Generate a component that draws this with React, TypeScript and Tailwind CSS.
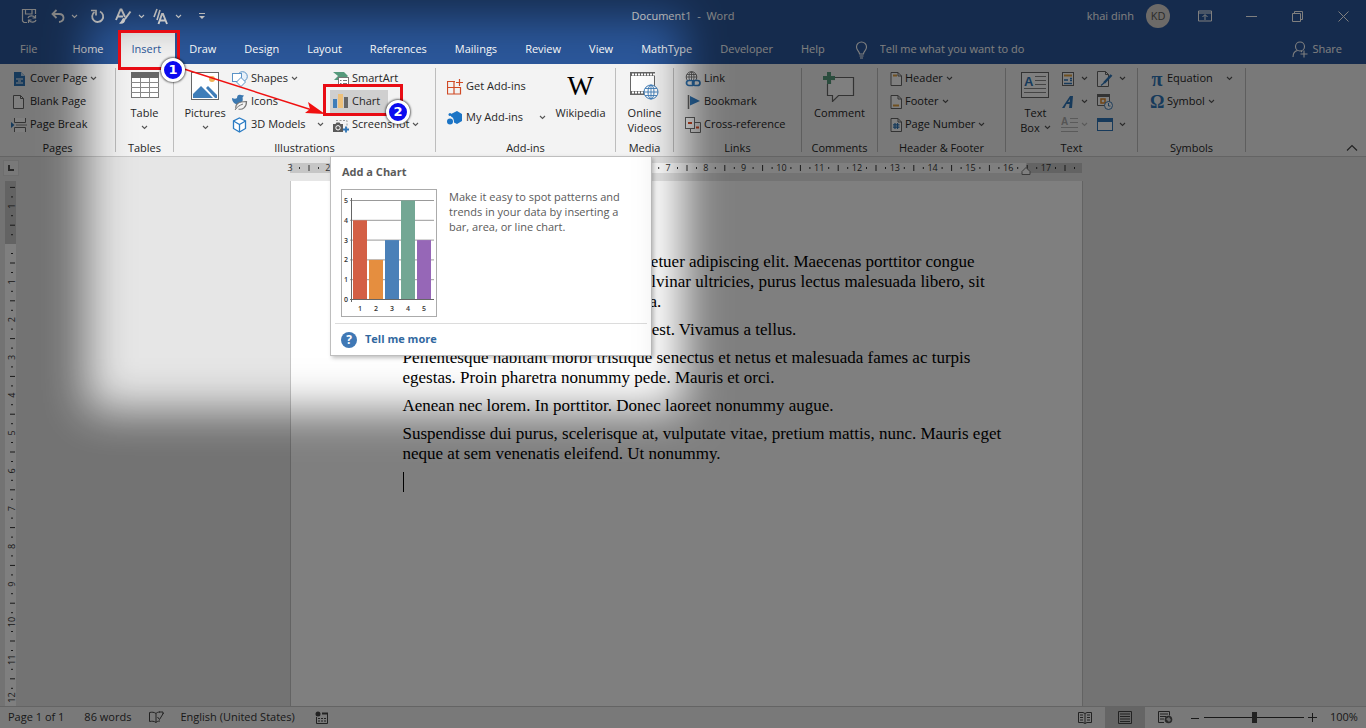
import type { ReactNode } from "react";

const UI_FONT = "font-['Open_Sans','Noto_Sans',sans-serif]";

function Icon({ w = 16, h = 16, children }: { w?: number; h?: number; children: ReactNode }) {
  return (
    <svg width={w} height={h} viewBox={`0 0 ${w} ${h}`} fill="none" className="shrink-0" aria-hidden="true">
      {children}
    </svg>
  );
}

function Caret({ light = false, faded = false }: { light?: boolean; faded?: boolean }) {
  return (
    <Icon w={7} h={5}>
      <path d="M1 1l2.5 2.5L6 1" stroke={light ? "#fff" : faded ? "#b5b5b5" : "#555"} strokeWidth="1.1" />
    </Icon>
  );
}

/* ---------- ribbon icons ---------- */

const CoverPageIcon = () => (
  <Icon>
    <path d="M3 1h7l4 4v10H3z" fill="#2e75b6" />
    <path d="M10 1v4h4z" fill="#bcd6ee" />
    <path d="M5 8h7M5 12h7M7 10h3" stroke="#fff" />
  </Icon>
);

const BlankPageIcon = () => (
  <Icon>
    <path d="M2.5 1.5h7l3 3v10h-10z" fill="#fff" stroke="#666" />
    <path d="M9.5 1.5v3h3" stroke="#666" />
  </Icon>
);

const PageBreakIcon = () => (
  <Icon>
    <path d="M3.500 1v4.500h11V1M3.500 15v-4.500h11V15" fill="#fff" stroke="#666" />
    <path d="M5 8h11" stroke="#888" />
    <path d="M0 5l3.500 3L0 11z" fill="#2e75b6" />
  </Icon>
);

const TableIcon = () => (
  <Icon w={28} h={26}>
    <rect x=".5" y=".5" width="27" height="25" fill="#fff" stroke="#777" />
    <rect width="28" height="6" fill="#666" />
    <path d="M9.500 6v20M18.500 6v20M0 10.500h28M0 15.500h28M0 20.500h28" stroke="#888" />
  </Icon>
);

const PicturesIcon = () => (
  <Icon w={28} h={28}>
    <rect x=".5" y=".5" width="27" height="27" fill="#fff" stroke="#666" />
    <circle cx="21" cy="7" r="3" fill="#f0b355" />
    <path d="M2 26v-4l8-8 12 12z" fill="#3f7db8" />
    <path d="M15 16l2-2 9 9v3h-2z" fill="#3f7db8" />
  </Icon>
);

const ShapesIcon = () => (
  <Icon>
    <circle cx="10.500" cy="5.500" r="4.800" fill="#e8f1fa" stroke="#5b93c7" />
    <rect x=".5" y="2.500" width="9" height="8" fill="#fff" stroke="#5b93c7" />
    <path d="M9 6.500l4.500 4.500L9 15.500 4.500 11z" fill="#fff" stroke="#5b93c7" />
  </Icon>
);

const IconsIcon = () => (
  <Icon>
    <path d="M0 4c2 1 4 1 5 0 0-3 2-4 4-3l3 .5-1.500 2c1 4-1 7-4.500 7C3 10.500 0 8 0 4z" fill="#3b78b0" />
    <path d="M4 14.500c-1-4 2-7 10.500-7 0 6-4 8.500-8 7.500" fill="#f3f3f3" stroke="#777" strokeWidth="1.200" />
    <path d="M3 16c2-3 4-4.500 8-6" stroke="#777" />
  </Icon>
);

const CubeIcon = () => (
  <Icon>
    <path d="M7.500 1l6 3v7.500l-6 3.500-6-3.500V4z" fill="#fff" stroke="#2b7cc4" strokeWidth="1.300" />
    <path d="M1.500 4l6 3.500 6-3.500M7.500 7.500V15" stroke="#2b7cc4" strokeWidth="1.300" />
  </Icon>
);

const SmartArtIcon = () => (
  <Icon>
    <path d="M0 1h11l4 4-4 4H1l4-4z" fill="#569a7c" />
    <rect x="5.500" y="6.500" width="10" height="9" fill="#fff" stroke="#777" />
    <path d="M7 9.500h1.500M7 12.500h1.500M10 9.500h4M10 12.500h4" stroke="#777" />
  </Icon>
);

const ChartIcon = () => (
  <Icon>
    <rect x="0" y="5" width="4" height="9" fill="#3f7db8" />
    <rect x="5" y="0" width="5" height="14" fill="#edc07a" />
    <rect x="11" y="3" width="4" height="11" fill="#666" />
  </Icon>
);

const ScreenshotIcon = () => (
  <Icon>
    <path d="M3 3.500h11v7" stroke="#999" strokeDasharray="2 1.500" />
    <path d="M0 7h2.500l1-1.500h3L7.500 7H10v8H0z" fill="#5a5a5a" />
    <circle cx="5" cy="10.800" r="2.200" stroke="#fff" />
    <path d="M13 9.500v6M10 12.500h6" stroke="#2e75b6" strokeWidth="1.800" />
  </Icon>
);

const GetAddinsIcon = () => (
  <Icon>
    <path d="M8 2.500H.5v12.500h13V8.500H.5M7 2.500V15" stroke="#d04a25" strokeWidth="1.200" />
    <path d="M12.500 0v7M9 3.500h7" stroke="#d04a25" strokeWidth="1.200" />
  </Icon>
);

const MyAddinsIcon = () => (
  <Icon>
    <path d="M10 1l5 3v7l-5 3-3-1.500C7 9 6 7 4 6.500V4z" fill="#1b74c5" />
    <circle cx="3" cy="11.500" r="3" fill="#1b74c5" />
    <circle cx="3" cy="4.500" r="1.500" fill="#1b74c5" />
  </Icon>
);

const OnlineVideosIcon = () => (
  <Icon w={29} h={28}>
    <rect x=".5" y=".5" width="24" height="22" fill="#fff" stroke="#666" />
    <path d="M1 2.500h24M1 20.500h24" stroke="#666" strokeWidth="3" />
    <path d="M2 2.500h23M2 20.500h23" stroke="#fff" strokeWidth="2" strokeDasharray="2 1" />
    <circle cx="21" cy="20" r="7" fill="#fff" stroke="#3f7db8" />
    <ellipse cx="21" cy="20" rx="3" ry="7" stroke="#3f7db8" />
    <path d="M14 20h14M15 16.500h12M15 23.500h12M21 13v14" stroke="#3f7db8" strokeWidth=".9" />
  </Icon>
);

const LinkIcon = () => (
  <Icon>
    <circle cx="6.500" cy="6" r="5.300" fill="#fff" stroke="#666" />
    <path d="M6.500 1v9M1 6h11M2 3.500h9" stroke="#666" strokeWidth=".9" />
    <ellipse cx="6.500" cy="6" rx="2.500" ry="5.300" stroke="#666" strokeWidth=".9" />
    <rect x="1.500" y="9.500" width="7.500" height="5" rx="2.500" fill="#f3f3f3" stroke="#2e75b6" strokeWidth="1.700" />
    <rect x="7.500" y="9.500" width="7.500" height="5" rx="2.500" stroke="#2e75b6" strokeWidth="1.700" />
  </Icon>
);

const BookmarkIcon = () => (
  <Icon>
    <path d="M3.500 1v14" stroke="#666" strokeWidth="1.500" />
    <path d="M5 2l10 5-10 4.500z" fill="#2e75b6" />
  </Icon>
);

const CrossRefIcon = () => (
  <Icon>
    <rect x=".5" y=".5" width="9" height="11" fill="#fff" stroke="#666" />
    <path d="M10 5.500h5.500v10h-10V12" stroke="#666" />
    <path d="M3 6h4M11 10.500h3" stroke="#d04a25" strokeWidth="2" />
  </Icon>
);

const CommentIcon = () => (
  <Icon w={32} h={30}>
    <path d="M4.500 5.500h26v18h-15l-6 6v-6h-5z" fill="#fff" stroke="#666" strokeWidth="1.200" />
    <path d="M6 0v12M0 6h12" stroke="#f3f3f3" strokeWidth="6" />
    <path d="M6 0v12M0 6h12" stroke="#569a7c" strokeWidth="4" />
  </Icon>
);

function DocIcon({ children }: { children?: ReactNode }) {
  return (
    <Icon w={12} h={14}>
      <path d="M1 .5h7L11.500 4v9.500H1z" fill="#fff" stroke="#666" />
      <path d="M8 .5V4h3.500" stroke="#666" />
      {children}
    </Icon>
  );
}

const TextBoxIcon = () => (
  <Icon w={28} h={26}>
    <rect x=".5" y=".5" width="27" height="25" fill="#fff" stroke="#666" />
    <text x="3" y="14" fontSize="13" fontWeight="700" fill="#2e75b6" fontFamily="Liberation Sans">
      A
    </text>
    <path d="M14 4.500h11M14 8.500h11M14 12.500h11M3 16.500h22M3 20.500h22" stroke="#888" />
  </Icon>
);

const QuickPartsIcon = () => (
  <Icon w={14} h={16}>
    <rect x="1.500" y="1.500" width="11" height="13" fill="#fff" stroke="#666" />
    <path d="M3 4.500h8" stroke="#e0a040" strokeWidth="2" />
    <path d="M3 9h4M3 12.500h8M9 7.500h2M9 9.500h2" stroke="#2e75b6" strokeWidth="1.500" />
  </Icon>
);

const WordArtIcon = () => (
  <Icon w={14} h={14}>
    <path d="M1 13L9 1h3l-1 12H8l.5-4h-3L3.500 13z" fill="#2e75b6" />
    <path d="M7 7h1.700L9 4z" fill="#f3f3f3" />
  </Icon>
);

const DropCapIcon = () => (
  <Icon w={17} h={17}>
    <text x="0" y="9" fontSize="10" fontWeight="700" fill="#aaa" fontFamily="Liberation Sans">
      A
    </text>
    <path d="M9 2.500h8M9 6.500h8M0 11.500h17M0 15.500h17" stroke="#b5b5b5" />
  </Icon>
);

const SignatureIcon = () => (
  <Icon>
    <path d="M.5.500h8l3 3v12H.5z" fill="#fff" stroke="#666" />
    <path d="M8.500.500v3h3" stroke="#666" />
    <path d="M14.500 4L7 12" stroke="#2e75b6" strokeWidth="2.500" />
    <path d="M7 12l-3 2.500" stroke="#2e75b6" strokeWidth="1.200" />
  </Icon>
);

const DateIcon = () => (
  <Icon>
    <path d="M.5.500h12v11H.5z" fill="#fff" stroke="#666" />
    <path d="M0 1.500h13" stroke="#666" strokeWidth="3" />
    <rect x="4" y="5" width="4" height="4" stroke="#e08a2c" strokeWidth="1.500" />
    <circle cx="11.500" cy="11.500" r="4" fill="#fff" stroke="#3f7db8" />
    <path d="M11.500 9v3h2" stroke="#3f7db8" />
  </Icon>
);

const ObjectIcon = () => (
  <Icon>
    <rect x=".5" y="1.500" width="15" height="12" fill="#fff" stroke="#2e75b6" />
    <rect y="1" width="16" height="4" fill="#2e75b6" />
  </Icon>
);

/* ---------- ribbon pieces ---------- */

function Row({ icon, label, caret = false, spread = false }: { icon: ReactNode; label: string; caret?: boolean; spread?: boolean }) {
  return (
    <button className="flex h-[23px] items-center gap-[3px] whitespace-nowrap">
      {icon}
      <span>{label}</span>
      {caret && (
        <span className={spread ? "ml-auto pl-2" : ""}>
          <Caret />
        </span>
      )}
    </button>
  );
}

function Big({ icon, lines, caret = false }: { icon: ReactNode; lines: string[]; caret?: boolean }) {
  return (
    <button className="flex flex-col items-center pt-[5px]">
      <span className="flex h-[33px] items-start">{icon}</span>
      {lines.map((line) => (
        <span key={line} className="h-[15px] leading-[15px]">
          {line}
        </span>
      ))}
      {caret && (
        <span className="flex h-[15px] items-center">
          <Caret />
        </span>
      )}
    </button>
  );
}

function Group({ title, width, children }: { title: string; width: string; children: ReactNode }) {
  return (
    <section className={`flex shrink-0 ${width}`}>
      <div className="flex min-w-0 flex-1 flex-col pt-[3px]">
        <div className="flex h-[69px] shrink-0">{children}</div>
        <h2 className="pt-[3px] text-center leading-[17px]">{title}</h2>
      </div>
      <div className="my-1 w-px bg-[#bdbdbd]" />
    </section>
  );
}

function Ribbon() {
  return (
    <div className="flex h-[93px] shrink-0 border-b border-[#c8c8c8] bg-[#f3f3f3] text-[#262626]">
      <Group title="Pages" width="w-[116px]">
        <div className="flex flex-col pl-[11px]">
          <Row icon={<CoverPageIcon />} label="Cover Page" caret />
          <Row icon={<BlankPageIcon />} label="Blank Page" />
          <Row icon={<PageBreakIcon />} label="Page Break" />
        </div>
      </Group>
      <Group title="Tables" width="w-[58px]">
        <div className="flex flex-1 justify-center">
          <Big icon={<TableIcon />} lines={["Table"]} caret />
        </div>
      </Group>
      <Group title="Illustrations" width="w-[262px]">
        <div className="flex w-[58px] justify-center pl-1">
          <Big icon={<PicturesIcon />} lines={["Pictures"]} caret />
        </div>
        <div className="flex w-[92px] flex-col">
          <Row icon={<ShapesIcon />} label="Shapes" caret />
          <Row icon={<IconsIcon />} label="Icons" />
          <Row icon={<CubeIcon />} label="3D Models" caret spread />
        </div>
        <div className="flex flex-col pl-[6px]">
          <span className="flex pl-[3px]">
            <Row icon={<SmartArtIcon />} label="SmartArt" />
          </span>
          <span className="flex self-start bg-[#cfcfcf] pr-2 pl-[3px]">
            <Row icon={<ChartIcon />} label="Chart" />
          </span>
          <span className="flex pl-[3px]">
            <Row icon={<ScreenshotIcon />} label="Screenshot" caret />
          </span>
        </div>
      </Group>
      <Group title="Add-ins" width="w-[180px]">
        <div className="flex w-[110px] flex-col gap-2 pt-2 pl-[11px]">
          <Row icon={<GetAddinsIcon />} label="Get Add-ins" />
          <Row icon={<MyAddinsIcon />} label="My Add-ins" caret spread />
        </div>
        <div className="flex flex-1 justify-center">
          <Big icon={<span className="font-['Liberation_Serif',serif] text-[28px] leading-7 text-black">W</span>} lines={["Wikipedia"]} />
        </div>
      </Group>
      <Group title="Media" width="w-[58px]">
        <div className="flex flex-1 justify-center">
          <Big icon={<OnlineVideosIcon />} lines={["Online", "Videos"]} />
        </div>
      </Group>
      <Group title="Links" width="w-[128px]">
        <div className="flex flex-col pl-[11px]">
          <Row icon={<LinkIcon />} label="Link" />
          <Row icon={<BookmarkIcon />} label="Bookmark" />
          <Row icon={<CrossRefIcon />} label="Cross-reference" />
        </div>
      </Group>
      <Group title="Comments" width="w-[76px]">
        <div className="flex flex-1 justify-center">
          <Big icon={<CommentIcon />} lines={["Comment"]} />
        </div>
      </Group>
      <Group title="Header & Footer" width="w-[128px]">
        <div className="flex flex-col pl-3">
          <Row icon={<DocIcon><path d="M3 3.500h4" stroke="#e0a040" strokeWidth="2" /></DocIcon>} label="Header" caret />
          <Row icon={<DocIcon><path d="M3 10.500h6" stroke="#e0a040" strokeWidth="2" /></DocIcon>} label="Footer" caret />
          <Row
            icon={<DocIcon><path d="M5 5v6M7.500 5v6M3 6.800h6.500M3 9.200h6.500" stroke="#2e75b6" strokeWidth="1.200" /></DocIcon>}
            label="Page Number"
            caret
          />
        </div>
      </Group>
      <Group title="Text" width="w-[132px]">
        <div className="flex w-[55px] justify-center pl-1">
          <button className="flex flex-col items-center pt-[5px]">
            <span className="flex h-[33px] items-start">
              <TextBoxIcon />
            </span>
            <span className="leading-[15px]">Text</span>
            <span className="flex items-center gap-1 leading-[15px]">
              Box <Caret />
            </span>
          </button>
        </div>
        <div className="flex w-9 flex-col">
          {[<QuickPartsIcon />, <WordArtIcon />, <DropCapIcon />].map((icon, i) => (
            <button key={i} aria-label={["Quick Parts", "WordArt", "Drop Cap"][i]} className="flex h-[23px] items-center">
              <span className="flex w-5">{icon}</span>
              <Caret faded={i === 2} />
            </button>
          ))}
        </div>
        <div className="flex flex-col">
          {[<SignatureIcon />, <DateIcon />, <ObjectIcon />].map((icon, i) => (
            <button key={i} aria-label={["Signature Line", "Date & Time", "Object"][i]} className="flex h-[23px] items-center">
              <span className="flex w-[22px]">{icon}</span>
              {i !== 1 && <Caret />}
            </button>
          ))}
        </div>
      </Group>
      <Group title="Symbols" width="w-[108px]">
        <div className="flex w-[95px] flex-col pl-3">
          <Row icon={<span className="w-[14px] font-['Liberation_Serif',serif] text-xl leading-5 font-bold text-[#2e75b6]">π</span>} label="Equation" caret spread />
          <Row icon={<span className="w-[14px] font-['Liberation_Serif',serif] text-lg leading-5 font-bold text-[#2e75b6]">Ω</span>} label="Symbol" caret />
        </div>
      </Group>
      <button aria-label="Collapse the Ribbon" className="mt-auto mr-2 mb-1 ml-auto">
        <Icon w={12} h={8}>
          <path d="M1 6.500l5-5 5 5" stroke="#444" strokeWidth="1.200" />
        </Icon>
      </button>
    </div>
  );
}

/* ---------- window chrome ---------- */

function TitleBar() {
  return (
    <header className="grid h-8 shrink-0 grid-cols-[1fr_auto_1fr] items-center text-white">
      <div className="flex items-center pl-[21px]">
        <button aria-label="Save" className="mr-[14px]">
          <Icon>
            <path d="M6 14.500H3L1.500 13V1.500h13V6M4.500 2v4h6.500V2" stroke="#fff" strokeWidth="1.200" />
            <path d="M7 10c.7-2.500 5-3 7-.5M14.500 7v3h-3M15 12c-.7 2.500-5 3-7 .5M7.500 15v-3h3" stroke="#fff" strokeWidth="1.200" />
          </Icon>
        </button>
        <button aria-label="Undo" className="mr-[6px]">
          <Icon w={14} h={14}>
            <path d="M5.500 1L1.500 5l4 4M2 5h6c6 0 6 7.500 0 8" stroke="#fff" strokeWidth="1.800" />
          </Icon>
        </button>
        <button aria-label="Undo history" className="mr-3">
          <Caret light />
        </button>
        <button aria-label="Repeat" className="mr-[10px]">
          <Icon w={15} h={15}>
            <path d="M10 2.500A5.500 5.500 0 1 1 4.500 3" stroke="#fff" strokeWidth="1.800" />
            <path d="M1 1.500h5v5" stroke="#fff" strokeWidth="1.700" />
          </Icon>
        </button>
        <button aria-label="Styles" className="mr-[6px]">
          <Icon w={17} h={17}>
            <path d="M1 12L5.500 1.500h1L10 9M3 8.500h5" stroke="#fff" strokeWidth="1.900" />
            <path d="M15.500 3.500L10 11" stroke="#fff" strokeWidth="2" />
            <path d="M4 15.500c3 1 6 0 6.500-4.500l-2-1c-1.500.5-1.500 3-4.500 5.500z" fill="#fff" />
          </Icon>
        </button>
        <button aria-label="More styles" className="mr-2">
          <Caret light />
        </button>
        <button aria-label="Text effects" className="mr-[7px]">
          <Icon w={15} h={17}>
            <path d="M1 9L4 1M4 12L7 2" stroke="#fff" strokeWidth="1.600" />
            <path d="M5.500 16L9 6h1l4 10M7 12.500h5.500" stroke="#fff" strokeWidth="1.900" />
          </Icon>
        </button>
        <button aria-label="More effects" className="mr-4">
          <Caret light />
        </button>
        <button aria-label="Customize Quick Access Toolbar">
          <Icon w={8} h={8}>
            <path d="M1 1.500h6" stroke="#fff" />
            <path d="M1 4h6L4 7z" fill="#fff" />
          </Icon>
        </button>
      </div>
      <h1>Document1&nbsp; -&nbsp; Word</h1>
      <div className="flex items-center justify-end">
        <span>khai dinh</span>
        <span className="mx-3 flex size-6 items-center justify-center rounded-full bg-[#d9d4d0] text-[#555]">KD</span>
        <button aria-label="Ribbon Display Options" className="flex w-[46px] justify-center">
          <Icon w={14} h={12}>
            <path d="M.5 1h13v10H.5zM.5 3h13M7 10V5M4.500 7L7 4.500 9.500 7" stroke="#fff" />
          </Icon>
        </button>
        <button aria-label="Minimize" className="flex w-[46px] justify-center">
          <Icon w={11} h={11}>
            <path d="M0 5.500h11" stroke="#fff" />
          </Icon>
        </button>
        <button aria-label="Restore Down" className="flex w-[46px] justify-center">
          <Icon w={11} h={11}>
            <path d="M.5 2.500h8v8h-8zM2.500 2.500v-2h8v8h-2" stroke="#fff" />
          </Icon>
        </button>
        <button aria-label="Close" className="flex w-[46px] justify-center">
          <Icon w={11} h={11}>
            <path d="M.5.500l10 10M10.500.500l-10 10" stroke="#fff" />
          </Icon>
        </button>
      </div>
    </header>
  );
}

const TABS = ["Home", "Insert", "Draw", "Design", "Layout", "References", "Mailings", "Review", "View", "MathType", "Developer", "Help"];

function TabBar() {
  return (
    <nav className="flex h-8 shrink-0 items-stretch text-white">
      <button className="pt-[3px] pr-[21px] pl-5">File</button>
      {TABS.map((tab) => (
        <button key={tab} className={`px-[14px] pt-[3px] ${tab === "Insert" ? "bg-[#f3f3f3] text-[#2b579a]" : ""}`}>
          {tab}
        </button>
      ))}
      <label className="flex flex-1 items-center gap-3 pt-[3px] pl-4">
        <Icon w={13} h={18}>
          <path d="M4.500 13c0-3-3-3.500-3-7a5 5 0 0 1 10 0c0 3.500-3 4-3 7zM4.500 15h4M5 17h3" stroke="#fff" strokeWidth="1.100" />
        </Icon>
        <input aria-label="Tell me what you want to do" placeholder="Tell me what you want to do" className="w-44 bg-transparent outline-none placeholder:text-white" />
      </label>
      <button className="flex items-center gap-1 pt-[3px] pr-6">
        <Icon w={16} h={17}>
          <circle cx="8" cy="5.500" r="4.500" stroke="#fff" strokeWidth="1.100" />
          <path d="M1 16c0-4 2-6 4.500-6.500M9 10l1 1M12 9.500v7M8.500 13h7" stroke="#fff" strokeWidth="1.100" />
        </Icon>
        Share
      </button>
    </nav>
  );
}

/* ---------- rulers ---------- */

const CM = 37.8;

function HorizontalRuler() {
  const marks = Array.from({ length: 21 }, (_, i) => i - 3);
  return (
    <svg width="800" height="24" viewBox="-3 0 800 24" className="-ml-[3px] shrink-0" aria-hidden="true">
      <rect x="0" y="6" width="792" height="10" fill="#c6c6c6" />
      <rect x={3 * CM} y="6" width="623" height="10" fill="#fff" />
      {marks.map((n) => {
        const x = (n + 3) * CM;
        return (
          <g key={n} fill="#333">
            {n !== 0 && (
              <text x={n === -3 ? 0 : x} y="14" fontSize="9" textAnchor="middle">
                {Math.abs(n)}
              </text>
            )}
            <rect x={x + 9} y="10" width="1" height="2" />
            <rect x={x + 18.500} y="8" width="1" height="6" />
            <rect x={x + 28} y="10" width="1" height="2" />
          </g>
        );
      })}
      <path d="M732 17.500v-3l4-4 4 4v3z" fill="#fff" stroke="#777" />
    </svg>
  );
}

function VerticalRuler() {
  const marks = Array.from({ length: 15 }, (_, i) => i - 2);
  return (
    <svg width="20" height="525" viewBox="0 0 20 525" className="shrink-0" aria-hidden="true">
      <rect x="5" y="0" width="11" height="525" fill="#fff" />
      <rect x="5" y="0" width="11" height="63" fill="#c6c6c6" />
      {marks.map((n) => {
        const y = 63 + n * CM;
        return (
          <g key={n} fill="#333">
            {n !== 0 && n !== -2 && (
              <text x="0" y="0" fontSize="9" textAnchor="middle" transform={`translate(15 ${y}) rotate(-90)`}>
                {Math.abs(n)}
              </text>
            )}
            <rect x="11" y={y + 9} width="2" height="1" />
            <rect x="10" y={y + 18.500} width="5" height="1" />
            <rect x="11" y={y + 28} width="2" height="1" />
          </g>
        );
      })}
    </svg>
  );
}

function DocumentArea() {
  return (
    <div className="flex min-h-0 flex-1 flex-col overflow-hidden bg-[#e6e6e6]">
      <div className="flex h-6 shrink-0">
        <div className="w-5 shrink-0 pt-[3px] pl-[3px]">
          <button aria-label="Left tab" className="flex size-4 items-center justify-center border border-[#ddd] bg-[#f3f3f3]">
            <Icon w={6} h={6}>
              <path d="M1 0v5h5" stroke="#555" strokeWidth="2" />
            </Icon>
          </button>
        </div>
        <div className="flex flex-1 justify-center pr-[14px]">
          <div className="w-[793px]">
            <HorizontalRuler />
          </div>
        </div>
      </div>
      <div className="flex min-h-0 flex-1">
        <VerticalRuler />
        <main className="flex flex-1 justify-center pr-[14px]">
          <article className="w-[793px] space-y-2 border-x border-[#c6c6c6] bg-white pt-[71px] pr-14 pl-28 font-['Liberation_Serif',serif] text-[17px] leading-5 whitespace-nowrap text-black">
            <p>
              Lorem ipsum dolor sit amet, consectetuer adipiscing elit. Maecenas porttitor congue
              <br />
              massa. Fusce posuere, magna sed pulvinar ultricies, purus lectus malesuada libero, sit
              <br />
              amet commodo magna eros quis urna.
            </p>
            <p>Nunc viverra imperdiet enim. Fusce est. Vivamus a tellus.</p>
            <p>
              Pellentesque habitant morbi tristique senectus et netus et malesuada fames ac turpis
              <br />
              egestas. Proin pharetra nonummy pede. Mauris et orci.
            </p>
            <p>Aenean nec lorem. In porttitor. Donec laoreet nonummy augue.</p>
            <p>
              Suspendisse dui purus, scelerisque at, vulputate vitae, pretium mattis, nunc. Mauris eget
              <br />
              neque at sem venenatis eleifend. Ut nonummy.
            </p>
            <div className="h-5 w-px bg-black" />
          </article>
        </main>
      </div>
    </div>
  );
}

function StatusBar() {
  return (
    <footer className="flex h-[22px] shrink-0 items-center border-t border-[#c8c8c8] bg-[#f3f3f3] pl-2 text-[#333]">
      <button className="mr-5">Page 1 of 1</button>
      <button className="mr-[18px]">86 words</button>
      <button aria-label="Proofing" className="mr-4">
        <Icon w={15} h={13}>
          <path d="M7 2.500C5 1 3 1 .5 1.500v9C3 10 5 10 7 11.500V2.500c1-1 2-1.500 4-1.500M7 11.500c1-1 2-1.500 4-1.500" stroke="#444" />
          <path d="M8.500 6l2 2.500L14.500 2M10 1h4v2" stroke="#444" />
        </Icon>
      </button>
      <button className="mr-5">English (United States)</button>
      <button aria-label="Macro recording">
        <Icon w={14} h={13}>
          <path d="M1.500 6v6.500h11v-10H7" stroke="#444" />
          <path d="M7 2.500h6" stroke="#444" strokeWidth="2" />
          <circle cx="3" cy="3" r="2.500" fill="#444" />
          <path d="M3 7.500h8M3 10h8" stroke="#444" strokeDasharray="2 1" />
        </Icon>
      </button>
      <div className="ml-auto flex h-full items-center">
        <button aria-label="Read Mode" className="flex h-full w-10 items-center justify-center">
          <Icon w={14} h={12}>
            <path d="M7 1.500L5 .5H.5v10H5l2 1 2-1h4.500V.5H9zM7 1.500v10M2 3h3M2 5.500h3M2 8h3M9 3h3M9 5.500h3M9 8h3" stroke="#444" />
          </Icon>
        </button>
        <button aria-label="Print Layout" className="flex h-full w-10 items-center justify-center bg-[#cacaca]">
          <Icon w={14} h={13}>
            <path d="M.5.500h13v12H.5zM2 3h10M2 5.500h10M2 8h10M2 10.500h10" stroke="#444" />
          </Icon>
        </button>
        <button aria-label="Web Layout" className="flex h-full w-10 items-center justify-center">
          <Icon w={15} h={13}>
            <path d="M6 11.500H.5V.5h11v4M2 3h8M2 5.500h6M2 8h4" stroke="#444" />
            <circle cx="10.500" cy="8.500" r="3.800" fill="#555" />
            <path d="M8 8l3-2 2 3-2 2z" fill="#ccc" />
          </Icon>
        </button>
        <button aria-label="Zoom out" className="flex w-[19px] justify-center">
          <Icon w={8} h={8}>
            <path d="M0 4.500h8" stroke="#333" />
          </Icon>
        </button>
        <input
          type="range"
          aria-label="Zoom"
          min={0}
          max={200}
          defaultValue={100}
          className="h-3 w-[100px] appearance-none bg-[linear-gradient(#333,#333)] bg-[length:100%_1px] bg-center bg-no-repeat [&::-webkit-slider-thumb]:h-[11px] [&::-webkit-slider-thumb]:w-[5px] [&::-webkit-slider-thumb]:appearance-none [&::-webkit-slider-thumb]:bg-[#444]"
        />
        <button aria-label="Zoom in" className="mr-[13px] ml-1">
          <Icon w={9} h={9}>
            <path d="M0 4.500h9M4.500 0v9" stroke="#333" />
          </Icon>
        </button>
        <button className="w-9 text-left">100%</button>
      </div>
    </footer>
  );
}

/* ---------- chart tooltip ---------- */

const BARS = [
  { value: 4, color: "#d35f45" },
  { value: 2, color: "#e58e3f" },
  { value: 3, color: "#4a80b8" },
  { value: 5, color: "#73a794" },
  { value: 3, color: "#9667b7" },
];

function ChartPreview() {
  return (
    <svg width="96" height="128" viewBox="0 0 96 128" className="shrink-0" aria-hidden="true">
      <rect x=".5" y=".5" width="95" height="127" fill="#fff" stroke="#ababab" />
      {[0, 1, 2, 3, 4, 5].map((n) => (
        <g key={n}>
          <path d={`M9 ${110.500 - n * 19.800}h84`} stroke="#999" />
          <text x="3" y={113 - n * 19.800} fontSize="7" fontWeight="600" fill="#333">
            {n}
          </text>
        </g>
      ))}
      {BARS.map((bar, i) => (
        <g key={i}>
          <rect x={12 + i * 16} y={110.500 - bar.value * 19.800} width="14" height={bar.value * 19.800} fill={bar.color} />
          <text x={19 + i * 16} y="122" fontSize="7" fontWeight="600" textAnchor="middle" fill="#333">
            {i + 1}
          </text>
        </g>
      ))}
      <path d="M10.500 9v104M9 110.500h84" stroke="#666" />
    </svg>
  );
}

function ChartTooltip() {
  return (
    <div role="tooltip" className="absolute top-[156px] left-[330px] w-[322px] border border-[#bebebe] bg-white text-[#5a5a5a] shadow-[2px_2px_4px_rgba(0,0,0,0.25)]">
      <h3 className="px-[11px] pt-[6px] pb-2 leading-[18px] font-bold">Add a Chart</h3>
      <div className="flex gap-3 px-[10px] pb-[6px]">
        <ChartPreview />
        <p className="leading-[15px] whitespace-nowrap">
          Make it easy to spot patterns and
          <br />
          trends in your data by inserting a
          <br />
          bar, area, or line chart.
        </p>
      </div>
      <div className="mx-1 border-t border-[#dcdcdc]">
        <a href="#" className="flex h-[31px] items-center gap-2 px-[6px] font-bold text-[#31689f]">
          <span className="flex size-4 items-center justify-center rounded-full bg-[#3f78b5] text-[12px] text-white">?</span>
          Tell me more
        </a>
      </div>
    </div>
  );
}

function StepBadge({ n, place }: { n: number; place: string }) {
  return (
    <span className={`absolute flex size-6 items-center justify-center rounded-full border-[3px] border-white bg-[#0a0aef] font-['DejaVu_Sans',sans-serif] text-[13px] font-bold text-white shadow-[0_0_2px_1px_rgba(0,0,0,0.55)] ${place}`}>
      {n}
    </span>
  );
}

export default function App() {
  return (
    <div className={`relative flex h-screen flex-col overflow-hidden bg-[#2b579a] text-[11px] ${UI_FONT}`}>
      <TitleBar />
      <TabBar />
      <Ribbon />
      <DocumentArea />
      <StatusBar />
      <ChartTooltip />

      {/* dim everything except a soft-edged window over the ribbon */}
      <div className="pointer-events-none absolute -top-[783px] -left-[713px] h-[1993px] w-[2196px] shadow-[inset_0_0_44px_800px_rgba(0,0,0,0.5)]" />

      <div className="pointer-events-none absolute top-[30px] left-[118px] h-10 w-[62px] border-[3px] border-[#e80c14]" />
      <div className="pointer-events-none absolute top-[84px] left-[323px] h-8 w-20 border-[3px] border-[#e80c14]" />
      <svg width="150" height="54" viewBox="0 0 150 54" fill="none" className="pointer-events-none absolute top-[65px] left-[178px]" aria-hidden="true">
        <path d="M6 4l128 41" stroke="#f01010" strokeWidth="1.500" />
        <path d="M147 49l-20-1 5-4-2-7z" fill="#f01010" />
      </svg>
      <StepBadge n={1} place="top-[58px] left-[161px]" />
      <StepBadge n={2} place="top-[100px] left-[386px]" />
    </div>
  );
}
